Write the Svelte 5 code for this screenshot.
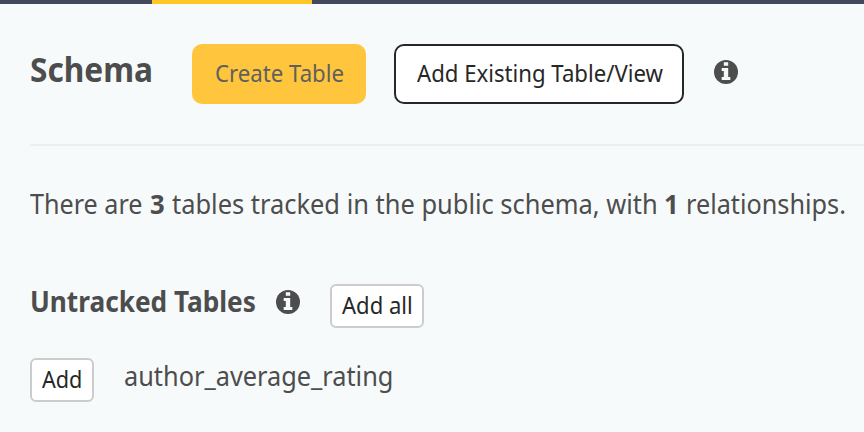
<script>
  const name = 'author_average_rating';
  const tracked = 3;
  const relationships = 1;
</script>

{#snippet info()}
  <svg class="info" viewBox="0 0 24 24" aria-hidden="true">
    <circle cx="12" cy="12" r="12" fill="#4d4d4d" />
    <path d="M9.8 2.2h4.4v3.6H9.8zM7.7 8h6.5v9.1h2.1v3H7.7v-3h2.1V11H7.7z" fill="#f7fafb" />
  </svg>
{/snippet}

{#snippet label(text, width, scale)}
  <span class="label" style="width:{width}px"><span style="transform:scaleX({scale})">{text}</span></span>
{/snippet}

<div class="page">
  <div class="topbar"><div class="active"></div></div>
  <header>
    <h1>{@render label('Schema', 122, 0.931)}</h1>
    <button class="create">{@render label('Create Table', 130, 0.945)}</button>
    <button class="existing">{@render label('Add Existing Table/View', 246, 0.943)}</button>
    {@render info()}
  </header>
  <p>
    {@render label('There are', 120, 0.932)}
    <b>{@render label(tracked, 22, 0.95)}</b>
    {@render label('tables tracked in the public schema, with', 492, 0.942)}
    <b>{@render label(relationships, 22, 0.95)}</b>
    {@render label('relationships.', 160, 0.935)}
  </p>
  <section class="untracked">
    <h2>{@render label('Untracked Tables', 226, 0.904)}</h2>
    {@render info()}
    <button class="small">{@render label('Add all', 70, 0.958)}</button>
  </section>
  <section class="row">
    <button class="small">{@render label('Add', 40, 0.94)}</button>
    <span class="name">{@render label(name, 270, 0.938)}</span>
  </section>
</div>

<style>
  :global(body) { background: #f7fafb; }
  .page {
    width: 864px;
    height: 432px;
    overflow: hidden;
    background: #f7fafb;
    color: #4d4d4d;
    font-family: "Noto Sans", sans-serif;
  }
  .topbar { height: 4px; background: #43495a; padding-left: 152px; }
  .active { width: 160px; height: 4px; background: #ffc627; }
  .label { display: inline-block; white-space: nowrap; }
  .label > span { display: inline-block; transform-origin: 0 50%; }
  button {
    box-sizing: border-box;
    flex: none;
    font-family: inherit;
    font-weight: 400;
    margin: 0;
    text-align: left;
    display: flex;
    align-items: center;
    white-space: nowrap;
  }
  .info { width: 24px; height: 24px; flex: none; display: block; }
  header {
    display: flex;
    align-items: flex-start;
    height: 100px;
    margin-left: 30px;
    padding-top: 40px;
    border-bottom: 2px solid #eee;
  }
  h1 { margin: 2px 40px 0 0; font-size: 34px; line-height: 46px; width: 122px; }
  header button { height: 60px; font-size: 23.5px; line-height: 30px; border-radius: 10px; }
  .create { width: 174px; padding: 0 0 2px 23px; border: 0; background: #ffc63d; color: #606060; }
  .existing { width: 290px; margin-left: 28px; padding: 0 0 2px 21px; border: 2px solid #272727; background: #fff; color: #272727; }
  header .info { margin: 16px 0 0 29.5px; }
  p { display: flex; margin: 38px 0 0 30px; font-size: 27px; line-height: 40px; }
  .untracked { display: flex; align-items: flex-start; margin: 60px 0 0 30px; height: 44px; }
  h2 { margin: 0 20px 0 0; width: 226px; font-size: 29px; line-height: 34px; }
  .untracked .info { margin-top: 6px; }
  .small { height: 44px; padding: 0 0 2px 10px; border: 2px solid #ccc; border-radius: 6px; background: #fff; color: #272727; font-size: 23px; line-height: 30px; }
  .untracked .small { width: 94px; margin-left: 30px; }
  .row { display: flex; align-items: flex-start; margin: 30px 0 0 30px; }
  .row .small { width: 64px; }
  .name { margin-left: 30px; font-size: 27px; line-height: 36px; }
</style>
